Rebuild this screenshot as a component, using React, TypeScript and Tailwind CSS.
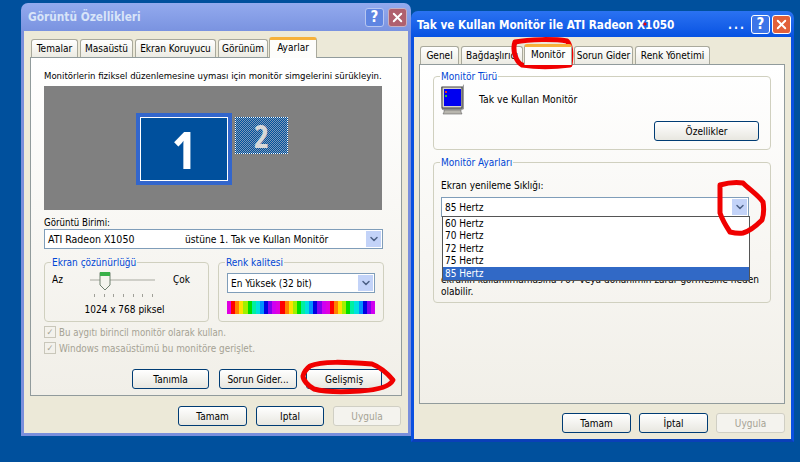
import type { ReactNode } from "react";
import { ChevronDown, X } from "lucide-react";

const rainbow = [
  "#e000e0", "#ff0000", "#ff8000", "#ffe000", "#a0f000", "#00e000", "#00f0a0", "#00e0e0",
  "#0090ff", "#0000e0", "#8000f0", "#d000f0",
];

function XpButton({ children, className = "", disabled = false }: { children: ReactNode; className?: string; disabled?: boolean }) {
  return (
    <div
      className={
        "flex h-[20px] items-center justify-center rounded-[3px] border " +
        (disabled
          ? "border-[#d0cfc4] bg-[#f4f3ee] text-[#a5a294] "
          : "border-[#003c74] bg-gradient-to-b from-white to-[#e8e7e0] text-black ") +
        className
      }
    >
      {children}
    </div>
  );
}

function Tab({ label, active = false, className = "" }: { label: string; active?: boolean; className?: string }) {
  if (active) {
    return (
      <div className={"z-10 -mb-px flex h-[21px] items-start justify-center rounded-t-[3px] border-x border-t-[3px] border-x-[#a9a99c] border-t-[#f6b13a] bg-[#fdfdfb] pt-[1px] " + className}>
        {label}
      </div>
    );
  }
  return (
    <div className={"flex h-[18px] items-center justify-center rounded-t-[3px] border-x border-t border-[#a9a99c] bg-gradient-to-b from-white to-[#ecebe3] " + className}>
      {label}
    </div>
  );
}

function Combo({ children, className = "" }: { children: ReactNode; className?: string }) {
  return (
    <div className={"flex h-[20px] items-center justify-between border border-[#7f9db9] bg-white pl-[3px] pr-[1px] " + className}>
      <div className="flex flex-1 whitespace-pre">{children}</div>
      <div className="flex h-[16px] w-[15px] items-center justify-center bg-[#c3d3f8]">
        <ChevronDown size={12} strokeWidth={3} className="text-[#4d6185]" />
      </div>
    </div>
  );
}

function Group({ title, children, className = "" }: { title: string; children: ReactNode; className?: string }) {
  return (
    <fieldset className={"rounded-[4px] border border-[#d0d0bf] " + className}>
      <legend className="ml-[6px] px-[1px] text-[#0046d5]">{title}</legend>
      {children}
    </fieldset>
  );
}

function TitleButtons({ inactive = false }: { inactive?: boolean }) {
  return (
    <div className={"flex " + (inactive ? "gap-[4px]" : "gap-[2px]")}>
      <div
        className={
          "flex h-[19px] w-[19px] items-center justify-center rounded-[3px] border text-[15px] font-bold text-white " +
          (inactive ? "border-[#b8c6f0] bg-[#5f85e2]" : "border-white bg-[#3d75e8]")
        }
      >
        ?
      </div>
      <div
        className={
          "flex h-[19px] w-[19px] items-center justify-center rounded-[3px] border text-white " +
          (inactive ? "border-[#c8b0c0] bg-[#b0606e]" : "border-white bg-[#e2603a]")
        }
      >
        <X size={15} strokeWidth={3} />
      </div>
    </div>
  );
}

function SliderThumb() {
  return (
    <svg width="12" height="20" viewBox="0 0 12 20" className="absolute left-[9px] -top-[1px]">
      <path d="M1 1.5h10V14l-5 5-5-5z" fill="#f4f4ee" stroke="#6f806f" />
      <rect x="1" y="1" width="10" height="4" fill="#38b048" />
    </svg>
  );
}

function DisplayProperties() {
  return (
    <div className="absolute left-[21px] top-[3px] flex h-[433px] w-[390px] flex-col overflow-hidden rounded-t-[7px]">
      <div className="flex h-[28px] shrink-0 items-center justify-between bg-gradient-to-b from-[#93aaee] to-[#7a93e0] pl-[7px] pr-[4px] text-[11.8px] font-bold text-[#d8e4f8]">
        <span className="pt-[1px]">Görüntü Özellikleri</span>
        <TitleButtons inactive />
      </div>
      <div className="flex flex-1 flex-col border-[3px] border-t-0 border-[#7a8fdc] bg-[#ece9d8] px-[6px] pt-[6px]">
        <div className="flex items-end gap-[2px] pl-[1px]">
          <Tab label="Temalar" className="w-[47px]" />
          <Tab label="Masaüstü" className="w-[53px]" />
          <Tab label="Ekran Koruyucu" className="w-[81px]" />
          <Tab label="Görünüm" className="w-[50px]" />
          <Tab label="Ayarlar" active className="-ml-[1px] w-[48px]" />
        </div>
        <div className="flex h-[339px] flex-col border border-[#919b9c] bg-gradient-to-b from-white to-[#f1efe8] pl-[13px] pr-[17px] pt-[11px]">
          <p className="h-[17px] whitespace-nowrap text-[9.5px]">Monitörlerin fiziksel düzenlemesine uyması için monitör simgelerini sürükleyin.</p>
          <div className="flex h-[124px] w-[338px] items-start gap-[3px] bg-[#808080] pl-[92px] pt-[27px]">
            <div className="flex h-[72px] w-[96px] border-[4px] border-[#3366cc]">
              <div className="flex flex-1 items-center justify-center border border-white bg-[#00509d] font-['Open_Sans',sans-serif] text-[52px] font-bold leading-none text-white">1</div>
            </div>
            <div className="mt-[4px] flex h-[37px] w-[53px] items-center justify-center border border-dotted border-white bg-[repeating-conic-gradient(#00509d_0_25%,#7f9ab8_0_50%)] bg-[length:2px_2px] font-['Open_Sans',sans-serif] text-[32px] font-bold leading-none text-[#d8d8d8]">2</div>
          </div>
          <p className="mt-[6px] h-[13px] text-[9.6px]">Görüntü Birimi:</p>
          <Combo className="w-[339px]">
            <span className="w-[137px] text-[10.5px]">ATI Radeon X1050</span>
            <span className="text-[10.2px]">üstüne 1. Tak ve Kullan Monitör</span>
          </Combo>
          <div className="mt-[7px] flex gap-[9px]">
            <Group title="Ekran çözünürlüğü" className="h-[66px] w-[165px]">
              <div className="flex items-start pl-[7px] pt-[4px]">
                <span className="w-[38px]">Az</span>
                <div className="relative -mt-[1px] h-[25px] w-[65px]">
                  <div className="absolute left-0 right-0 top-[7px] h-[2px] bg-[#cfcfc8]" />
                  <SliderThumb />
                  <div className="absolute left-[4px] right-[2px] top-[22px] flex justify-between">
                    {[0, 1, 2, 3, 4, 5, 6].map((t) => (
                      <span key={t} className="h-[3px] w-px bg-[#a0a098]" />
                    ))}
                  </div>
                </div>
                <span className="ml-[18px]">Çok</span>
              </div>
              <p className="mt-[6px] pr-[4px] text-center">1024 x 768 piksel</p>
            </Group>
            <Group title="Renk kalitesi" className="h-[66px] w-[166px]">
              <div className="px-[8px] pt-[4px]">
                <Combo>En Yüksek (32 bit)</Combo>
                <div className="mt-[8px] flex h-[13px]">
                  {[0, 1, 2].flatMap((c) =>
                    rainbow.map((color, i) => <span key={`${c}-${i}`} className="flex-1" style={{ backgroundColor: color }} />)
                  )}
                </div>
              </div>
            </Group>
          </div>
          <div className="mt-[4px] flex flex-col gap-[4px] text-[#a5a294]">
            <label className="flex h-[12px] items-center gap-[3px] text-[9.6px]">
              <span className="flex size-[12px] items-center justify-center border border-[#c9c7ba] text-[9px] leading-none">✓</span>
              Bu aygıtı birincil monitör olarak kullan.
            </label>
            <label className="flex h-[12px] items-center gap-[3px] text-[9.9px]">
              <span className="flex size-[12px] items-center justify-center border border-[#c9c7ba] text-[9px] leading-none">✓</span>
              Windows masaüstümü bu monitöre gerişlet.
            </label>
          </div>
          <div className="mt-[15px] flex justify-end pr-[2px]">
            <XpButton className="w-[77px]">Tanımla</XpButton>
            <XpButton className="ml-[10px] w-[78px]">Sorun Gider...</XpButton>
            <XpButton className="ml-[9px] w-[76px]">Gelişmiş</XpButton>
          </div>
        </div>
        <div className="mt-[10px] flex justify-end gap-[9px] pr-[1px]">
          <XpButton className="w-[69px]">Tamam</XpButton>
          <XpButton className="w-[68px]">Iptal</XpButton>
          <XpButton disabled className="w-[68px]">Uygula</XpButton>
        </div>
      </div>
    </div>
  );
}

function MonitorGlyph() {
  return (
    <svg width="24" height="31" viewBox="0 0 24 31" className="shrink-0">
      <path d="M0 3h21l2-3v25l-2 1H1z" fill="#9a9a9a" />
      <rect x="1" y="3" width="20" height="21" fill="#d6d3ca" stroke="#444" />
      <rect x="3" y="5" width="17" height="17" fill="#0000f0" />
      <rect x="4" y="7" width="2" height="2" fill="#e03030" />
      <rect x="4" y="11" width="2" height="2" fill="#30c030" />
      <path d="M3 26h17v2l1 2H2l1-2z" fill="#b8b6ae" stroke="#666" strokeWidth=".6" />
    </svg>
  );
}

function MonitorProperties() {
  return (
    <div className="absolute left-[411px] top-[11px] flex h-[431px] w-[383px] flex-col overflow-hidden rounded-t-[7px]">
      <div className="flex h-[26px] shrink-0 items-center justify-between bg-gradient-to-b from-[#2a72f2] to-[#0652e2] pl-[6px] pr-[3px] text-[11.7px] font-bold text-white">
        <span className="flex-1 whitespace-nowrap pt-[3px]">Tak ve Kullan Monitör ile ATI Radeon X1050</span>
        <span className="pr-[5px] pt-[3px] tracking-[2px]">...</span>
        <TitleButtons />
      </div>
      <div className="flex flex-1 flex-col border-[3px] border-t-0 border-[#0a50e0] border-b-[#0a3fb8] bg-[#ece9d8] pl-[5px] pr-[6px] pt-[7px]">
        <div className="flex items-end gap-[2px] pl-[1px]">
          <Tab label="Genel" className="w-[39px]" />
          <Tab label="Bağdaşlırıcı" className="w-[62px]" />
          <Tab label="Monitör" active className="-ml-[1px] w-[48px]" />
          <Tab label="Sorun Gider" className="w-[59px]" />
          <Tab label="Renk Yönetimi" className="w-[75px]" />
        </div>
        <div className="flex h-[340px] flex-col gap-[6px] border border-[#919b9c] bg-gradient-to-b from-white to-[#f1efe8] px-[13px] pt-[5px]">
          <Group title="Monitör Türü" className="h-[80px]">
            <div className="flex items-center gap-[14px] px-[7px] pt-[1px]">
              <MonitorGlyph />
              <span className="text-[10.3px]">Tak ve Kullan Monitör</span>
            </div>
            <div className="mt-[6px] flex justify-end pr-[11px]">
              <XpButton className="w-[105px]">Özellikler</XpButton>
            </div>
          </Group>
          <Group title="Monitör Ayarları" className="relative h-[147px]">
            <div className="px-[7px] pt-[10px]">
              <p className="h-[14px]">Ekran yenileme Sıklığı:</p>
              <Combo className="mt-[4px] w-[308px]">85 Hertz</Combo>
              <p className="mt-[57px] whitespace-nowrap leading-[12px]">
                ekranın kullanılmamasına 767 veya donanımın zarar görmesine neden
                <br />
                olabilir.
              </p>
            </div>
            <ul className="absolute left-[8px] top-[47px] w-[308px] border border-[#555] bg-white">
              {["60 Hertz", "70 Hertz", "72 Hertz", "75 Hertz", "85 Hertz"].map((hz) => (
                <li key={hz} className={"flex h-[12.5px] items-center pl-[2px] " + (hz === "85 Hertz" ? "bg-[#3169c6] text-white" : "")}>
                  {hz}
                </li>
              ))}
            </ul>
          </Group>
        </div>
        <div className="mt-[9px] flex justify-end gap-[8px] pr-0">
          <XpButton className="w-[69px]">Tamam</XpButton>
          <XpButton className="w-[69px]">İptal</XpButton>
          <XpButton disabled className="w-[69px]">Uygula</XpButton>
        </div>
      </div>
    </div>
  );
}

// hand-drawn marker circles over the two dialogs
function Marks() {
  return (
    <svg width="800" height="462" viewBox="0 0 800 462" fill="none" stroke="#f00000" strokeWidth="5" strokeLinecap="round" strokeLinejoin="round" className="absolute left-0 top-0">
      <path d="M310 366C322 361 345 362 372 364C380 367 388 374 393 380C390 386 378 390 360 391C345 392 325 392 314 389C308 386 303 380 303 376C304 372 306 369 310 366Z" />
      <path d="M515 42C530 39 555 39 567 41C572 46 571 58 570 65C555 67 535 67 522 65C516 62 512 50 515 42Z" />
      <path d="M720 185C727 183 736 182 743 183C750 190 758 195 763 202C764 208 764 214 762 220C756 226 750 231 743 233C738 234 734 233 730 232C726 226 722 219 720 213C720 204 720 194 720 185Z" />
      <circle cx="645" cy="24" r="1.5" fill="#f00000" stroke="none" />
    </svg>
  );
}

export default function App() {
  return (
    <div className="relative h-[462px] w-[800px] overflow-hidden bg-[#00509d] font-['DejaVu_Sans',sans-serif] font-stretch-condensed text-[10px] leading-[13px] text-black">
      <DisplayProperties />
      <MonitorProperties />
      <Marks />
    </div>
  );
}
